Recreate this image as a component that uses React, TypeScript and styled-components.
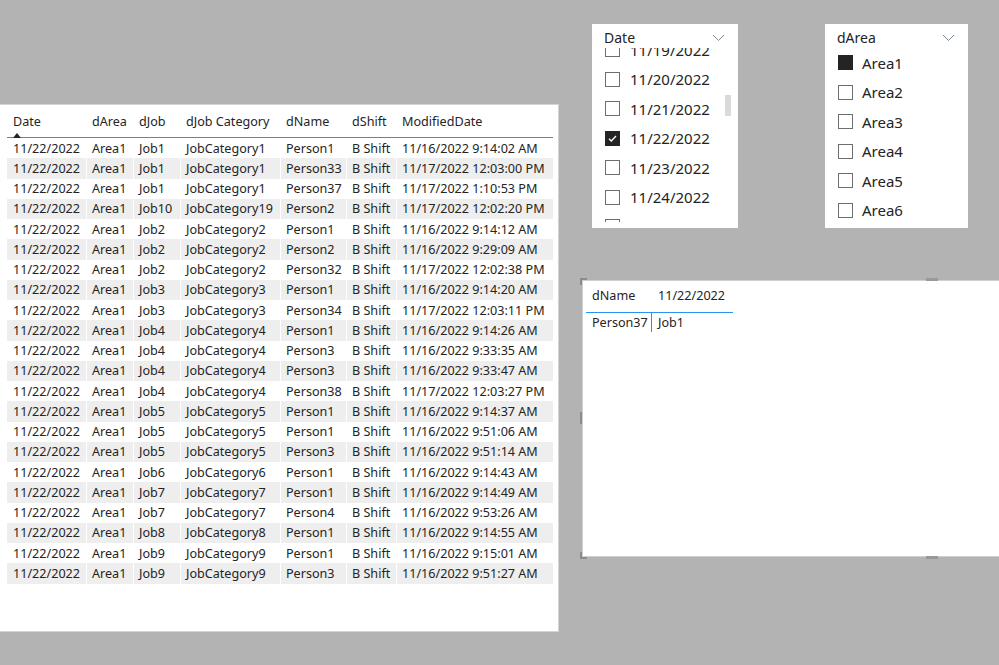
import React from 'react'
import styled, { createGlobalStyle, css } from 'styled-components'

const GlobalStyle = createGlobalStyle`
	html, body {
		margin: 0;
		padding: 0;
		background: #b3b3b3;
	}
	body {
		font-family: 'Segoe UI', 'Noto Sans', 'Open Sans', sans-serif;
		color: #252423;
	}
`

const ACCENT = '#2a92f0'

type Row = [string, string, string, string, string, string, string]

const rows: Row[] = [
	['11/22/2022', 'Area1', 'Job1', 'JobCategory1', 'Person1', 'B Shift', '11/16/2022 9:14:02 AM'],
	['11/22/2022', 'Area1', 'Job1', 'JobCategory1', 'Person33', 'B Shift', '11/17/2022 12:03:00 PM'],
	['11/22/2022', 'Area1', 'Job1', 'JobCategory1', 'Person37', 'B Shift', '11/17/2022 1:10:53 PM'],
	['11/22/2022', 'Area1', 'Job10', 'JobCategory19', 'Person2', 'B Shift', '11/17/2022 12:02:20 PM'],
	['11/22/2022', 'Area1', 'Job2', 'JobCategory2', 'Person1', 'B Shift', '11/16/2022 9:14:12 AM'],
	['11/22/2022', 'Area1', 'Job2', 'JobCategory2', 'Person2', 'B Shift', '11/16/2022 9:29:09 AM'],
	['11/22/2022', 'Area1', 'Job2', 'JobCategory2', 'Person32', 'B Shift', '11/17/2022 12:02:38 PM'],
	['11/22/2022', 'Area1', 'Job3', 'JobCategory3', 'Person1', 'B Shift', '11/16/2022 9:14:20 AM'],
	['11/22/2022', 'Area1', 'Job3', 'JobCategory3', 'Person34', 'B Shift', '11/17/2022 12:03:11 PM'],
	['11/22/2022', 'Area1', 'Job4', 'JobCategory4', 'Person1', 'B Shift', '11/16/2022 9:14:26 AM'],
	['11/22/2022', 'Area1', 'Job4', 'JobCategory4', 'Person3', 'B Shift', '11/16/2022 9:33:35 AM'],
	['11/22/2022', 'Area1', 'Job4', 'JobCategory4', 'Person3', 'B Shift', '11/16/2022 9:33:47 AM'],
	['11/22/2022', 'Area1', 'Job4', 'JobCategory4', 'Person38', 'B Shift', '11/17/2022 12:03:27 PM'],
	['11/22/2022', 'Area1', 'Job5', 'JobCategory5', 'Person1', 'B Shift', '11/16/2022 9:14:37 AM'],
	['11/22/2022', 'Area1', 'Job5', 'JobCategory5', 'Person1', 'B Shift', '11/16/2022 9:51:06 AM'],
	['11/22/2022', 'Area1', 'Job5', 'JobCategory5', 'Person3', 'B Shift', '11/16/2022 9:51:14 AM'],
	['11/22/2022', 'Area1', 'Job6', 'JobCategory6', 'Person1', 'B Shift', '11/16/2022 9:14:43 AM'],
	['11/22/2022', 'Area1', 'Job7', 'JobCategory7', 'Person1', 'B Shift', '11/16/2022 9:14:49 AM'],
	['11/22/2022', 'Area1', 'Job7', 'JobCategory7', 'Person4', 'B Shift', '11/16/2022 9:53:26 AM'],
	['11/22/2022', 'Area1', 'Job8', 'JobCategory8', 'Person1', 'B Shift', '11/16/2022 9:14:55 AM'],
	['11/22/2022', 'Area1', 'Job9', 'JobCategory9', 'Person1', 'B Shift', '11/16/2022 9:15:01 AM'],
	['11/22/2022', 'Area1', 'Job9', 'JobCategory9', 'Person3', 'B Shift', '11/16/2022 9:51:27 AM'],
]

const columns = ['Date', 'dArea', 'dJob', 'dJob Category', 'dName', 'dShift', 'ModifiedDate']

const dates = ['11/19/2022', '11/20/2022', '11/21/2022', '11/22/2022', '11/23/2022', '11/24/2022', '11/25/2022']
const areas = ['Area1', 'Area2', 'Area3', 'Area4', 'Area5', 'Area6']

// report canvas: visuals sit in the tracks of one grid
const Canvas = styled.div`
	width: 999px;
	height: 665px;
	overflow: hidden;
	display: grid;
	grid-template-columns: 559px 23px 10px 146px 87px 143px 31px;
	grid-template-rows: 24px 80px 124px 52px 277px 75px 33px;
`

const TablePanel = styled.div`
	grid-column: 1 / 2;
	grid-row: 3 / 7;
	background: #fff;
	border: 1px solid #d4d4d4;
	border-left: none;
	padding: 0 5px 0 7px;
`

const TableGrid = styled.div`
	display: grid;
	grid-template-columns: 79px 47px 47px 100px 66px 50px 157px;
	font-size: 12.6px;
	line-height: 16px;
`

const HeadCell = styled.div`
	height: 33px;
	padding: 9px 0 0 6px;
	box-sizing: border-box;
	border-bottom: 1px solid ${ACCENT};
	white-space: nowrap;
	display: flex;
	flex-direction: column;
`

const SortArrow = styled.span`
	display: block;
	margin-top: 3px;
	width: 0;
	height: 0;
	border-left: 4px solid transparent;
	border-right: 4px solid transparent;
	border-bottom: 5px solid #252423;
`

const Cell = styled.div<{ $striped: boolean; $first: boolean }>`
	height: 20.25px;
	display: flex;
	align-items: center;
	padding: 1px 0 0 6px;
	box-sizing: border-box;
	white-space: nowrap;
	background: ${({ $striped }) => ($striped ? '#eeeeee' : '#fff')};
	${({ $first }) =>
		!$first &&
		css`
			border-left: 1px solid #fff;
			padding-left: 5px;
		`}
`

const SlicerPanel = styled.div<{ $col: string }>`
	grid-column: ${({ $col }) => $col};
	grid-row: 2 / 4;
	background: #fff;
	display: flex;
	flex-direction: column;
	position: relative;
`

const SlicerHeader = styled.div`
	height: 24px;
	padding: 4px 13px 0 12px;
	box-sizing: border-box;
	display: flex;
	align-items: center;
	justify-content: space-between;
	font-size: 14px;
	line-height: 18px;
`

const Chevron = styled.svg`
	width: 13px;
	height: 8px;
	fill: none;
	stroke: #7b8a98;
	stroke-width: 1;
`

const ListViewport = styled.div<{ $height: number }>`
	height: ${({ $height }) => `${$height}px`};
	overflow: hidden;
	position: relative;
`

const List = styled.div<{ $offset: number }>`
	margin-top: ${({ $offset }) => `${$offset}px`};
	display: flex;
	flex-direction: column;
`

const Item = styled.div<{ $gap: number }>`
	height: 29.5px;
	flex: none;
	display: flex;
	align-items: center;
	gap: ${({ $gap }) => `${$gap}px`};
	padding-left: 13px;
	font-size: 15px;
	white-space: nowrap;
`

const Box = styled.span<{ $filled: boolean }>`
	width: 15px;
	height: 15px;
	box-sizing: border-box;
	flex: none;
	display: flex;
	align-items: center;
	justify-content: center;
	border: 1px solid ${({ $filled }) => ($filled ? '#252423' : '#6e6e6e')};
	background: ${({ $filled }) => ($filled ? '#252423' : '#fff')};
`

const ScrollThumb = styled.div`
	position: absolute;
	right: 7px;
	top: 71px;
	width: 6px;
	height: 21px;
	background: #dadada;
`

const MatrixPanel = styled.div`
	grid-column: 3 / 8;
	grid-row: 5 / 6;
	background: #fff;
	border: 1px solid #cfcfcf;
	border-right: none;
	padding-left: 3px;
	position: relative;
`

const MatrixGrid = styled.div`
	display: grid;
	grid-template-columns: 66px 81px;
	font-size: 12.6px;
	line-height: 16px;
`

const MatrixHead = styled.div`
	height: 32px;
	box-sizing: border-box;
	padding: 7px 0 0 6px;
	border-bottom: 1px solid ${ACCENT};
	white-space: nowrap;
`

const MatrixCell = styled.div<{ $divider?: boolean }>`
	height: 19px;
	display: flex;
	align-items: center;
	padding-left: 6px;
	white-space: nowrap;
	border-right: ${({ $divider }) => ($divider ? `1px solid ${ACCENT}` : 'none')};
`

const CornerGrip = styled.span<{ $bottom?: boolean }>`
	position: absolute;
	left: -3px;
	width: 5px;
	height: 5px;
	border-left: 2px solid #8c8c8c;
	${({ $bottom }) =>
		$bottom
			? css`
					bottom: -3px;
					border-bottom: 2px solid #8c8c8c;
			  `
			: css`
					top: -3px;
					border-top: 2px solid #8c8c8c;
			  `}
`

const SideGrip = styled.span`
	position: absolute;
	left: -3px;
	top: 131px;
	width: 2px;
	height: 12px;
	background: #8c8c8c;
`

const EdgeGrip = styled.span<{ $bottom?: boolean }>`
	position: absolute;
	left: 343px;
	width: 12px;
	height: 3px;
	background: #999;
	${({ $bottom }) => ($bottom ? 'bottom: -3px;' : 'top: -3px;')}
`

const ChevronIcon = () => (
	<Chevron viewBox='0 0 13 8'>
		<polyline points='1,1 6.5,6.5 12,1' />
	</Chevron>
)

const CheckMark = () => (
	<svg width='11' height='11' viewBox='0 0 11 11' fill='none' stroke='#fff' strokeWidth='1.3'>
		<polyline points='2,5.8 4.3,8 9,3' />
	</svg>
)

const DataTable = () => (
	<TablePanel>
		<TableGrid>
			{columns.map((c, i) => (
				<HeadCell key={c}>
					{c}
					{i === 0 && <SortArrow />}
				</HeadCell>
			))}
			{rows.map((r, ri) =>
				r.map((v, ci) => (
					<Cell key={`${ri}-${ci}`} $striped={ri % 2 === 1} $first={ci === 0}>
						{v}
					</Cell>
				)),
			)}
		</TableGrid>
	</TablePanel>
)

const DateSlicer = () => (
	<SlicerPanel $col='4 / 5'>
		<SlicerHeader>
			Date
			<ChevronIcon />
		</SlicerHeader>
		<ListViewport $height={174}>
			<List $offset={-13}>
				{dates.map(d => (
					<Item key={d} $gap={10}>
						<Box $filled={d === '11/22/2022'}>{d === '11/22/2022' && <CheckMark />}</Box>
						{d}
					</Item>
				))}
			</List>
		</ListViewport>
		<ScrollThumb />
	</SlicerPanel>
)

const AreaSlicer = () => (
	<SlicerPanel $col='6 / 7'>
		<SlicerHeader>
			dArea
			<ChevronIcon />
		</SlicerHeader>
		<ListViewport $height={180}>
			<List $offset={0}>
				{areas.map(a => (
					<Item key={a} $gap={9}>
						<Box $filled={a === 'Area1'} />
						{a}
					</Item>
				))}
			</List>
		</ListViewport>
	</SlicerPanel>
)

const Matrix = () => (
	<MatrixPanel>
		<CornerGrip />
		<CornerGrip $bottom />
		<SideGrip />
		<EdgeGrip />
		<EdgeGrip $bottom />
		<MatrixGrid>
			<MatrixHead>dName</MatrixHead>
			<MatrixHead>11/22/2022</MatrixHead>
			<MatrixCell $divider>Person37</MatrixCell>
			<MatrixCell>Job1</MatrixCell>
		</MatrixGrid>
	</MatrixPanel>
)

const App = () => (
	<>
		<GlobalStyle />
		<Canvas>
			<DataTable />
			<DateSlicer />
			<AreaSlicer />
			<Matrix />
		</Canvas>
	</>
)

export default App
